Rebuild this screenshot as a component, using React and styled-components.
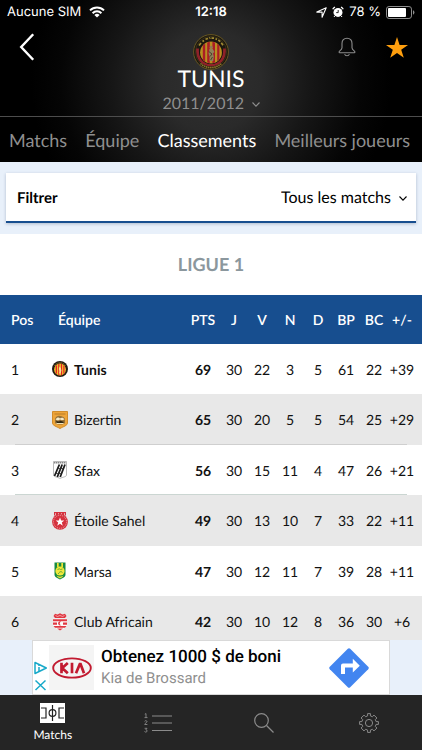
import styled, { createGlobalStyle } from "styled-components";

const teams = [
  { pos: 1, name: "Tunis", crest: "tunis", stats: [69, 30, 22, 3, 5, 61, 22, "+39"], current: true },
  { pos: 2, name: "Bizertin", crest: "bizertin", stats: [65, 30, 20, 5, 5, 54, 25, "+29"] },
  { pos: 3, name: "Sfax", crest: "sfax", stats: [56, 30, 15, 11, 4, 47, 26, "+21"] },
  { pos: 4, name: "Étoile Sahel", crest: "etoile", stats: [49, 30, 13, 10, 7, 33, 22, "+11"] },
  { pos: 5, name: "Marsa", crest: "marsa", stats: [47, 30, 12, 11, 7, 39, 28, "+11"] },
  { pos: 6, name: "Club Africain", crest: "africain", stats: [42, 30, 10, 12, 8, 36, 30, "+6"] },
];

const columns = ["PTS", "J", "V", "N", "D", "BP", "BC", "+/-"];

const App = () => {
  return (
    <Screen>
      <GlobalStyle />
      <Header>
        <StatusBar>
          <Carrier>
            Aucune SIM
            <WifiIcon />
          </Carrier>
          <Clock>12:18</Clock>
          <Indicators>
            <LocationIcon />
            <AlarmIcon />
            <span>78 %</span>
            <BatteryIcon />
          </Indicators>
        </StatusBar>
        <TeamBar>
          <BackButton aria-label="Retour">
            <svg width="16" height="28" viewBox="0 0 16 28" fill="none" stroke="#fff" strokeWidth="2.4">
              <path d="M14.2 1.2 2.2 14l12 12.8" />
            </svg>
          </BackButton>
          <TeamInfo>
            <ClubCrest />
            <TeamName>TUNIS</TeamName>
            <SeasonPicker>
              <SeasonSelect aria-label="Saison" defaultValue="2011/2012">
                <option>2011/2012</option>
              </SeasonSelect>
              <Chevron />
            </SeasonPicker>
          </TeamInfo>
          <Actions>
            <IconButton aria-label="Notifications">
              <BellIcon />
            </IconButton>
            <IconButton aria-label="Favori">
              <StarIcon />
            </IconButton>
          </Actions>
        </TeamBar>
        <Tabs>
          <Tab href="#matchs">Matchs</Tab>
          <Tab href="#equipe">Équipe</Tab>
          <Tab href="#classements" $active>
            Classements
          </Tab>
          <Tab href="#joueurs">Meilleurs joueurs</Tab>
        </Tabs>
      </Header>

      <Content>
        <FilterArea>
          <FilterCard>
            <FilterLabel htmlFor="filter">Filtrer</FilterLabel>
            <FilterPicker>
              <FilterSelect id="filter" defaultValue="Tous les matchs">
                <option>Tous les matchs</option>
              </FilterSelect>
              <Chevron />
            </FilterPicker>
          </FilterCard>
        </FilterArea>
        <League>LIGUE 1</League>
        <Table>
          <thead>
            <HeadRow>
              <PosHead>Pos</PosHead>
              <TeamHead>Équipe</TeamHead>
              {columns.map((c) => (
                <StatHead key={c} $wide={c === "PTS"} $last={c === "+/-"}>
                  {c}
                </StatHead>
              ))}
            </HeadRow>
          </thead>
          <tbody>
            {teams.map((team) => (
              <Row key={team.pos}>
                <PosCell>{team.pos}</PosCell>
                <td>
                  <Team $bold={team.current}>
                    <Crest name={team.crest} />
                    {team.name}
                  </Team>
                </td>
                {team.stats.map((value, i) => (
                  <StatCell key={columns[i]} $bold={i === 0} $last={i === 7}>
                    {value}
                  </StatCell>
                ))}
              </Row>
            ))}
          </tbody>
        </Table>
      </Content>

      <AdStrip>
        <Ad href="#annonce">
          <AdMarks />
          <AdLogo>
            <KiaLogo />
          </AdLogo>
          <AdText>
            <AdTitle>Obtenez 1000 $ de boni</AdTitle>
            <AdSource>Kia de Brossard</AdSource>
          </AdText>
          <DirectionsIcon />
        </Ad>
      </AdStrip>

      <BottomNav>
        <NavItem href="#matchs">
          <PitchIcon />
          Matchs
        </NavItem>
        <NavItem href="#classement" aria-label="Classement">
          <ListIcon />
        </NavItem>
        <NavItem href="#recherche" aria-label="Recherche">
          <SearchIcon />
        </NavItem>
        <NavItem href="#reglages" aria-label="Réglages">
          <GearIcon />
        </NavItem>
      </BottomNav>
    </Screen>
  );
};

export default App;

/* icons */

const WifiIcon = () => (
  <svg width="16" height="12" viewBox="0 0 16 12" fill="none" stroke="#fff" strokeWidth="2">
    <path d="M1 4.4a10 10 0 0 1 14 0" />
    <path d="M3.6 7.2a6.2 6.2 0 0 1 8.8 0" />
    <path d="M8 11.6 5.4 9a3.7 3.7 0 0 1 5.2 0z" fill="#fff" stroke="none" />
  </svg>
);

const LocationIcon = () => (
  <svg width="11" height="11" viewBox="0 0 11 11" fill="none" stroke="#fff" strokeWidth="1.1" strokeLinejoin="round">
    <path d="M10.2.8 6.1 10.2V5.1H.8z" />
  </svg>
);

const AlarmIcon = () => (
  <svg width="12" height="12" viewBox="0 0 12 12">
    <circle cx="6" cy="6.400" r="4.500" fill="#fff" />
    <path d="M.7 3.200A6 6 0 0 1 3 .9M11.300 3.200A6 6 0 0 0 9 .9" stroke="#fff" strokeWidth="1.200" fill="none" />
    <path d="M2.900 9.800l-.9 1.200M9.100 9.800l.9 1.200" stroke="#fff" strokeWidth="1" fill="none" />
    <path d="M6.200 4v2.600H4.200" stroke="#111" strokeWidth=".9" fill="none" />
  </svg>
);

const BatteryIcon = () => (
  <svg width="29" height="13" viewBox="0 0 29 13">
    <rect x=".5" y=".5" width="25" height="12" rx="2.600" fill="none" stroke="#8d8d8d" />
    <rect x="2" y="2" width="18" height="9" rx="1" fill="#fff" />
    <path d="M27 4.300a2.400 2.400 0 0 1 0 4.400z" fill="#8d8d8d" />
  </svg>
);

const BellIcon = () => (
  <svg width="18" height="20" viewBox="0 0 18 20" fill="none" stroke="#8c8c8c" strokeWidth="1.1" strokeLinejoin="round">
    <path d="M9 1.2c-3.2 0-5 2.200-5 5.300v4.300c0 1.600-1.400 2.500-2.600 3.500-.6.600-.4 1.400.3 1.400h14.600c.7 0 .9-.8.3-1.400-1.200-1-2.600-1.900-2.600-3.500V6.500c0-3.100-1.800-5.300-5-5.300z" />
    <path d="M6.600 17.200a2.500 2.200 0 0 0 4.800 0" />
  </svg>
);

const StarIcon = () => (
  <svg width="22" height="21" viewBox="0 0 22 21" fill="#ff9f0e">
    <path d="M11 0l2.600 7.900H22l-6.800 4.900 2.600 8L11 15.900l-6.800 4.900 2.600-8L0 7.900h8.400z" />
  </svg>
);

const Chevron = () => (
  <svg width="8" height="5" viewBox="0 0 8 5" fill="none" stroke="currentColor" strokeWidth="1.1">
    <path d="M.5.5 4 4.200 7.500.5" />
  </svg>
);

const ClubCrest = () => (
  <svg width="36" height="36" viewBox="0 0 36 36">
    <circle cx="18" cy="18" r="17.400" fill="#1c1810" stroke="#6f5d22" strokeWidth=".9" />
    <circle cx="18" cy="18" r="15.600" fill="none" stroke="#54481f" strokeWidth=".5" />
    <path
      d="M6 11.500l2-2.500M9.500 7.500l1.500-1M12.500 5.300l2.500-.8M16.500 4.500l.5-1M18.500 4.200h2.500M22.500 4.800l1.500.6M25.300 6l2 1.600M28.300 8.800l1.700 2.400"
      fill="none"
      stroke="#a38b32"
      strokeWidth="1.700"
    />
    <path d="M4.500 14.500C4 25 9.500 31 18 31s14-6 13.500-16.500" fill="none" stroke="#8e2229" strokeWidth="2.800" />
    <circle cx="18" cy="18.500" r="11.600" fill="#15120d" />
    <circle cx="18" cy="18.500" r="10.900" fill="#b98e20" />
    <path d="M9.800 11.500v14l2.400 2.200V9.400zM14.200 8.400v20.200l2.600.6V7.800zM19.400 7.800v21.400l2.600-.6V8.400zM24.200 9.700v17.600l2.200-2V11.600z" fill="#ab1d25" />
    <circle cx="18.200" cy="13.300" r="1.500" fill="#8d7b55" />
    <path d="M16.500 15h3.300l1.700 3-1.500 1.300.8 3.200-.6 4.500h-3.700l.3-4-1.300-3.500z" fill="#8f8158" />
    <path d="M15.800 17.500l3.200 2.500-2 2.500M19.500 23l-1.800 3" stroke="#403925" strokeWidth=".9" fill="none" />
    <path d="M7.500 29.500a15.500 15.500 0 0 0 21 0" fill="none" stroke="#8c7629" strokeWidth="1.600" strokeDasharray="1.500 .6" />
  </svg>
);

const crests = {
  tunis: (
    <>
      <circle cx="8" cy="9" r="8" fill="#211b15" />
      <path d="M2.600 5.800A6.300 6.300 0 0 1 13.400 5.800" fill="none" stroke="#a98d2c" strokeWidth=".8" strokeDasharray="1.200 .7" />
      <circle cx="8" cy="9.500" r="5.900" fill="#f1c42c" />
      <path d="M3.700 6v7l1.300 1V5zM6.200 4v11.200h1.200V3.700zM8.900 3.700v11.500h1.200V4zM11.300 5v9l1.200-1V6z" fill="#e32226" />
      <path d="M7.600 6.500l1.200 1.500.6 2.500-.8 3H7l.5-2.500-.7-2z" fill="#f3e09a" />
    </>
  ),
  bizertin: (
    <>
      <path d="M.5.500h15v11.500c0 2.500-4 3.500-7.500 5.500C4.500 15.500.5 14.500.5 12z" fill="#eea53a" stroke="#d18c2b" />
      <path d="M2.500 2.500h11v1h-11z" fill="#b87b26" />
      <path d="M3 8c1-3 3.500-3.500 5-3s4 .5 5 3v4c-2 2-8 2-10 0z" fill="#94713a" />
      <path d="M3.500 8.500c2-2.500 3-2.500 4.500-1 1.500-1.500 3.500-1 4.500 1l-2.500.8-2-.8-2 1z" fill="#f5ebcb" />
      <path d="M4 10l3 .5 1.500-.7L12 11l-1 1H5z" fill="#302713" />
      <path d="M4.500 12.500h7" stroke="#f1e4b8" strokeWidth="1" />
    </>
  ),
  sfax: (
    <>
      <path d="M1.500.500h13v13.500c0 2-4 2-6.500 3.500-2.500-1.500-6.500-1.500-6.500-3.500z" fill="#fff" stroke="#aaa" strokeWidth=".8" />
      <path d="M2 1.800h12" stroke="#888" strokeWidth="1.400" strokeDasharray="1.500 .5" />
      <path d="M7.400 3.500 2.500 15M10.200 3.500 5.300 16M13 3.500 8.200 16" stroke="#1c1c1c" strokeWidth="1.800" />
      <path d="M5.500 7.500h6M4 12.500h6" stroke="#222" strokeWidth=".7" />
    </>
  ),
  etoile: (
    <>
      <path d="M2 0h12v3.500H2z" fill="#d5313d" />
      <path d="M3.500 1.200v2M6.500 1.200v2M9.500 1.200v2M12.500 1.200v2" stroke="#eee" strokeWidth=".7" />
      <circle cx="8" cy="9.800" r="7.900" fill="#d5313d" />
      <circle cx="8" cy="9.800" r="6.500" fill="none" stroke="#f1bdc0" strokeWidth=".8" strokeDasharray="1 1" />
      <path d="M8 5.400l1.200 3.100h3.100l-2.500 2 1 3.200L8 11.800l-2.800 1.900 1-3.200-2.500-2h3.100z" fill="#fff" />
    </>
  ),
  marsa: (
    <>
      <path d="M2.500.500h11v12c0 3-3 3.500-5.500 5-2.500-1.500-5.500-2-5.500-5z" fill="#168b43" />
      <path d="M5 1h1.700v4H5zM9.300 1H11v4H9.300z" fill="#f1e436" />
      <circle cx="8" cy="9" r="4.600" fill="#f2e83a" />
      <path d="M5.500 8c1-1.500 2-1.500 3-.5M7 10.500l2-1 1.500 1M8.500 7.500l2-.5M6 11l1 1" fill="none" stroke="#4a9c38" strokeWidth=".8" />
      <path d="M4.500 13.500c2 1.500 5 1.500 7 0l-1.200 1.800L8 16.500l-2.300-1.200z" fill="#e4de38" />
    </>
  ),
  africain: (
    <>
      <path d="M1.500 3 3 .8l2.500.7L8 .3l2.500 1.200L13 .8 14.500 3 13 5H3z" fill="#e13842" />
      <path d="M3.500 2.500l2 1 2.500-1 2.500 1 2-1" stroke="#f6c9cc" strokeWidth=".7" fill="none" />
      <path d="M1 5.800h14v6.700c-1.500 2.500-4.500 3.500-7 5-2.500-1.500-5.500-2.500-7-5z" fill="#fbfbfb" />
      <path d="M1 6.300h14v2H1zM1 9.600h4v2.100H1zM11 9.600h4v2.100h-4zM1.500 12.900h13l-1.500 1.800H3zM5 15.600h6L8 17.600z" fill="#e13842" />
      <path d="M9.300 8.800a2 2 0 1 0 0 3.200 1.600 1.600 0 1 1 0-3.200z" fill="#e13842" />
    </>
  ),
};

const Crest = ({ name }) => (
  <svg width="16" height="18" viewBox="0 0 16 18" aria-hidden="true">
    {crests[name]}
  </svg>
);

const AdMarks = () => (
  <svg width="13" height="30" viewBox="0 0 13 30" fill="none" stroke="#17a9c9" strokeWidth="1.500">
    <path d="M1 1.500v11L12.300 7z" strokeLinejoin="round" />
    <path d="M5 6v4.500M5 3.800v1.300" />
    <path d="M1.500 19.500l10 9.500M11.500 19.500l-10 9.500" />
  </svg>
);

const KiaLogo = () => (
  <svg width="40" height="22" viewBox="0 0 40 22" fill="none" stroke="#c21a30">
    <ellipse cx="20" cy="11" rx="18.800" ry="9.600" strokeWidth="1.900" />
    <g strokeWidth="2.700">
      <path d="M9.500 5.800v10.400M15.800 6l-5.600 5 5.600 5.200M20 5.800v10.400M24 16.200l3.800-9h.8l3.400 9" />
    </g>
  </svg>
);

const DirectionsIcon = () => (
  <svg width="40" height="40" viewBox="0 0 40 40">
    <path d="M18.800.8a1.700 1.700 0 0 1 2.400 0l18 18a1.700 1.700 0 0 1 0 2.400l-18 18a1.700 1.700 0 0 1-2.400 0l-18-18a1.700 1.700 0 0 1 0-2.400z" fill="#4285f0" />
    <path d="M12 26v-8.500a2 2 0 0 1 2-2h9.800v-4.700l7 6.900-7 6.900v-5H16V26z" fill="#fff" />
  </svg>
);

const PitchIcon = () => (
  <svg width="25" height="20" viewBox="0 0 25 20">
    <path d="M0 0h25v20H0z" fill="#fff" />
    <g fill="none" stroke="#222" strokeWidth="1.200">
      <path d="M1 5h5v10H1M24 5h-5v10h5M12.500 2v16" />
      <circle cx="12.500" cy="10" r="3.400" />
    </g>
  </svg>
);

const ListIcon = () => (
  <svg width="28" height="20" viewBox="0 0 28 20" fill="none" stroke="#8b8b8b" strokeWidth="1.200">
    <path d="M8 3h20M8 10h20M8 17.500h20" />
    <path
      d="M.8 1.200 2 .6v4M.5 4.600h3M.6 8.300C1 7.400 3 7.400 3 8.700c0 .8-2.300 1.600-2.300 2.800h2.700M.6 15.300h2.400l-1.200 1.500c1.800 0 1.700 2.300 0 2.300-.6 0-1.100-.3-1.300-.6"
      strokeWidth=".9"
    />
  </svg>
);

const SearchIcon = () => (
  <svg width="20" height="20" viewBox="0 0 20 20" fill="none" stroke="#8b8b8b" strokeWidth="1.200">
    <circle cx="7.500" cy="7.500" r="6.800" />
    <path d="M12.500 12.500 19.500 19.500" />
  </svg>
);

const GearIcon = () => (
  <svg width="20" height="20" viewBox="0 0 20 20" fill="none" stroke="#8b8b8b" strokeWidth="1" strokeLinejoin="round">
    <path d="M8.600.600h2.800v2.300l2 .8L15 2.100l2.900 2.900-1.600 1.600.8 2h2.300v2.800h-2.300l-.8 2 1.600 1.600-2.900 2.900-1.600-1.600-2 .8v2.300H8.600v-2.300l-2-.8L5 17.900 2.100 15l1.600-1.600-.8-2H.6V8.600h2.300l.8-2L2.100 5 5 2.100l1.600 1.600 2-.8z" />
    <circle cx="10" cy="10" r="3.600" />
  </svg>
);

/* styles */

const GlobalStyle = createGlobalStyle`
  * {
    box-sizing: border-box;
  }
  body {
    margin: 0;
    font-family: Lato, "Liberation Sans", sans-serif;
    background: #fff;
    text-rendering: geometricPrecision;
  }
  svg {
    display: block;
    flex-shrink: 0;
  }
`;

const Screen = styled.div`
  display: flex;
  flex-direction: column;
  height: 100vh;
`;

const Header = styled.header`
  color: #fff;
  background: radial-gradient(circle at 50% 50%, #303030 0, #2a2a2a 50px, #161616 100px, #050505 150px, #000 180px);
`;

const StatusBar = styled.div`
  display: grid;
  grid-template-columns: 1fr auto 1fr;
  align-items: center;
  height: 24px;
  padding: 0 7px;
  font-family: Inter, "Liberation Sans", sans-serif;
  font-size: 13px;
`;

const Carrier = styled.div`
  display: flex;
  align-items: center;
  gap: 8px;
`;

const Clock = styled.div`
  font-weight: 600;
`;

const Indicators = styled.div`
  display: flex;
  align-items: center;
  justify-content: flex-end;
  gap: 5px;
`;

const TeamBar = styled.div`
  display: grid;
  grid-template-columns: 1fr auto 1fr;
  align-items: start;
  padding: 10px 14px 0;
  border-bottom: 1px solid #4d4d4d;
`;

const IconButton = styled.button`
  display: flex;
  align-items: center;
  justify-self: start;
  height: 26px;
  padding: 0;
  border: 0;
  background: none;
`;

const BackButton = styled(IconButton)`
  padding-left: 5px;
`;

const TeamInfo = styled.div`
  display: flex;
  flex-direction: column;
  align-items: center;
`;

const TeamName = styled.h1`
  margin: -4px 0 0;
  font-size: 23px;
  font-weight: 400;
  line-height: 24px;
`;

const SeasonPicker = styled.div`
  display: flex;
  align-items: center;
  gap: 7px;
  padding: 4px 0 2px;
  color: #8f8f8f;
`;

const Select = styled.select`
  appearance: none;
  padding: 0;
  border: 0;
  background: none;
  color: inherit;
  font-family: inherit;
  line-height: 20px;
  text-rendering: inherit;
`;

const SeasonSelect = styled(Select)`
  font-size: 16px;
`;

const Actions = styled.div`
  display: flex;
  justify-content: flex-end;
  gap: 30px;
`;

const Tabs = styled.nav`
  display: flex;
  justify-content: space-between;
  padding: 12px 12px 10px 9px;
`;

const Tab = styled.a`
  color: ${(p) => (p.$active ? "#fff" : "#8f8f8f")};
  font-size: 18px;
  line-height: 23px;
  text-decoration: none;
  white-space: nowrap;
`;

const Content = styled.main`
  flex: 1;
  min-height: 0;
  overflow-y: auto;
  scrollbar-width: none;
`;

const FilterArea = styled.div`
  padding: 11px 6px;
  background: #e8f0fa;
`;

const FilterCard = styled.div`
  display: flex;
  align-items: center;
  justify-content: space-between;
  height: 50px;
  padding: 2px 9px 0 11px;
  border-bottom: 2px solid #174e8f;
  background: #fff;
  box-shadow: 0 1px 3px rgba(0, 30, 80, 0.25);
`;

const FilterLabel = styled.label`
  font-size: 15px;
  font-weight: 700;
`;

const FilterPicker = styled.div`
  display: flex;
  align-items: center;
  gap: 8px;
`;

const FilterSelect = styled(Select)`
  font-size: 16px;
`;

const League = styled.h2`
  margin: 0;
  padding: 20px 0;
  color: #8b979d;
  font-size: 18px;
  font-weight: 700;
  line-height: 21px;
  text-align: center;
`;

const Table = styled.table`
  width: 100%;
  table-layout: fixed;
  border-collapse: collapse;
  color: #111;
  font-size: 14px;

  td,
  th {
    padding: 0;
  }
`;

const HeadRow = styled.tr`
  height: 49px;
  background: #174e8f;
  color: #fff;
`;

const HeadCell = styled.th`
  font-weight: 600;
`;

const PosHead = styled(HeadCell)`
  width: 52px;
  &&& {
    padding-left: 11px;
    text-align: left;
  }
`;

const TeamHead = styled(HeadCell)`
  &&& {
    padding-left: 6px;
    text-align: left;
  }
`;

const StatHead = styled(HeadCell)`
  width: ${(p) => (p.$wide || p.$last ? 34 : 28)}px;
  &&& {
    padding-right: ${(p) => (p.$last ? 6 : 0)}px;
  }
`;

const Row = styled.tr`
  height: 50px;

  &:nth-child(even) {
    height: 51px;
    background: #e8e8e8;
  }

  &:nth-child(2) {
    background: linear-gradient(#cfcfcf, #cfcfcf) 15px 100% / calc(100% - 30px) 1px no-repeat #e8e8e8;
  }

  &:nth-child(3) {
    background: linear-gradient(#cbd6d2, #cbd6d2) 15px 100% / calc(100% - 30px) 1px no-repeat #fff;
  }
`;

const PosCell = styled.td`
  &&& {
    padding-left: 11px;
  }
`;

const Team = styled.div`
  display: flex;
  align-items: center;
  gap: 6px;
  font-weight: ${(p) => (p.$bold ? 700 : 400)};
  white-space: nowrap;
`;

const StatCell = styled.td`
  font-weight: ${(p) => (p.$bold ? 700 : 400)};
  text-align: center;
  &&& {
    padding-right: ${(p) => (p.$last ? 6 : 0)}px;
  }
`;

const AdStrip = styled.aside`
  padding: 0 32px;
  background: #e8f0fa;
`;

const Ad = styled.a`
  display: flex;
  align-items: center;
  height: 55px;
  padding: 0 20px 0 1px;
  border: 1px solid #d9d9d9;
  background: #fff;
  text-decoration: none;
  font-family: Roboto, sans-serif;

  & > svg:first-child {
    align-self: flex-end;
    margin-bottom: 3px;
  }
`;

const AdLogo = styled.div`
  display: flex;
  align-items: center;
  justify-content: center;
  width: 45px;
  height: 45px;
  margin: 0 7px 0 2px;
  background: #f4f4f4;
`;

const AdText = styled.div`
  flex: 1;
  white-space: nowrap;
`;

const AdTitle = styled.div`
  color: #000;
  font-size: 17px;
  font-weight: 500;
  line-height: 21px;
`;

const AdSource = styled.div`
  color: #8f8f8f;
  font-size: 15px;
  line-height: 20px;
`;

const BottomNav = styled.nav`
  display: grid;
  grid-template-columns: repeat(4, 1fr);
  height: 55px;
  background: #252525;
`;

const NavItem = styled.a`
  display: flex;
  flex-direction: column;
  align-items: center;
  justify-content: center;
  gap: 5px;
  color: #fff;
  font-size: 12px;
  line-height: 14px;
  text-decoration: none;
`;
